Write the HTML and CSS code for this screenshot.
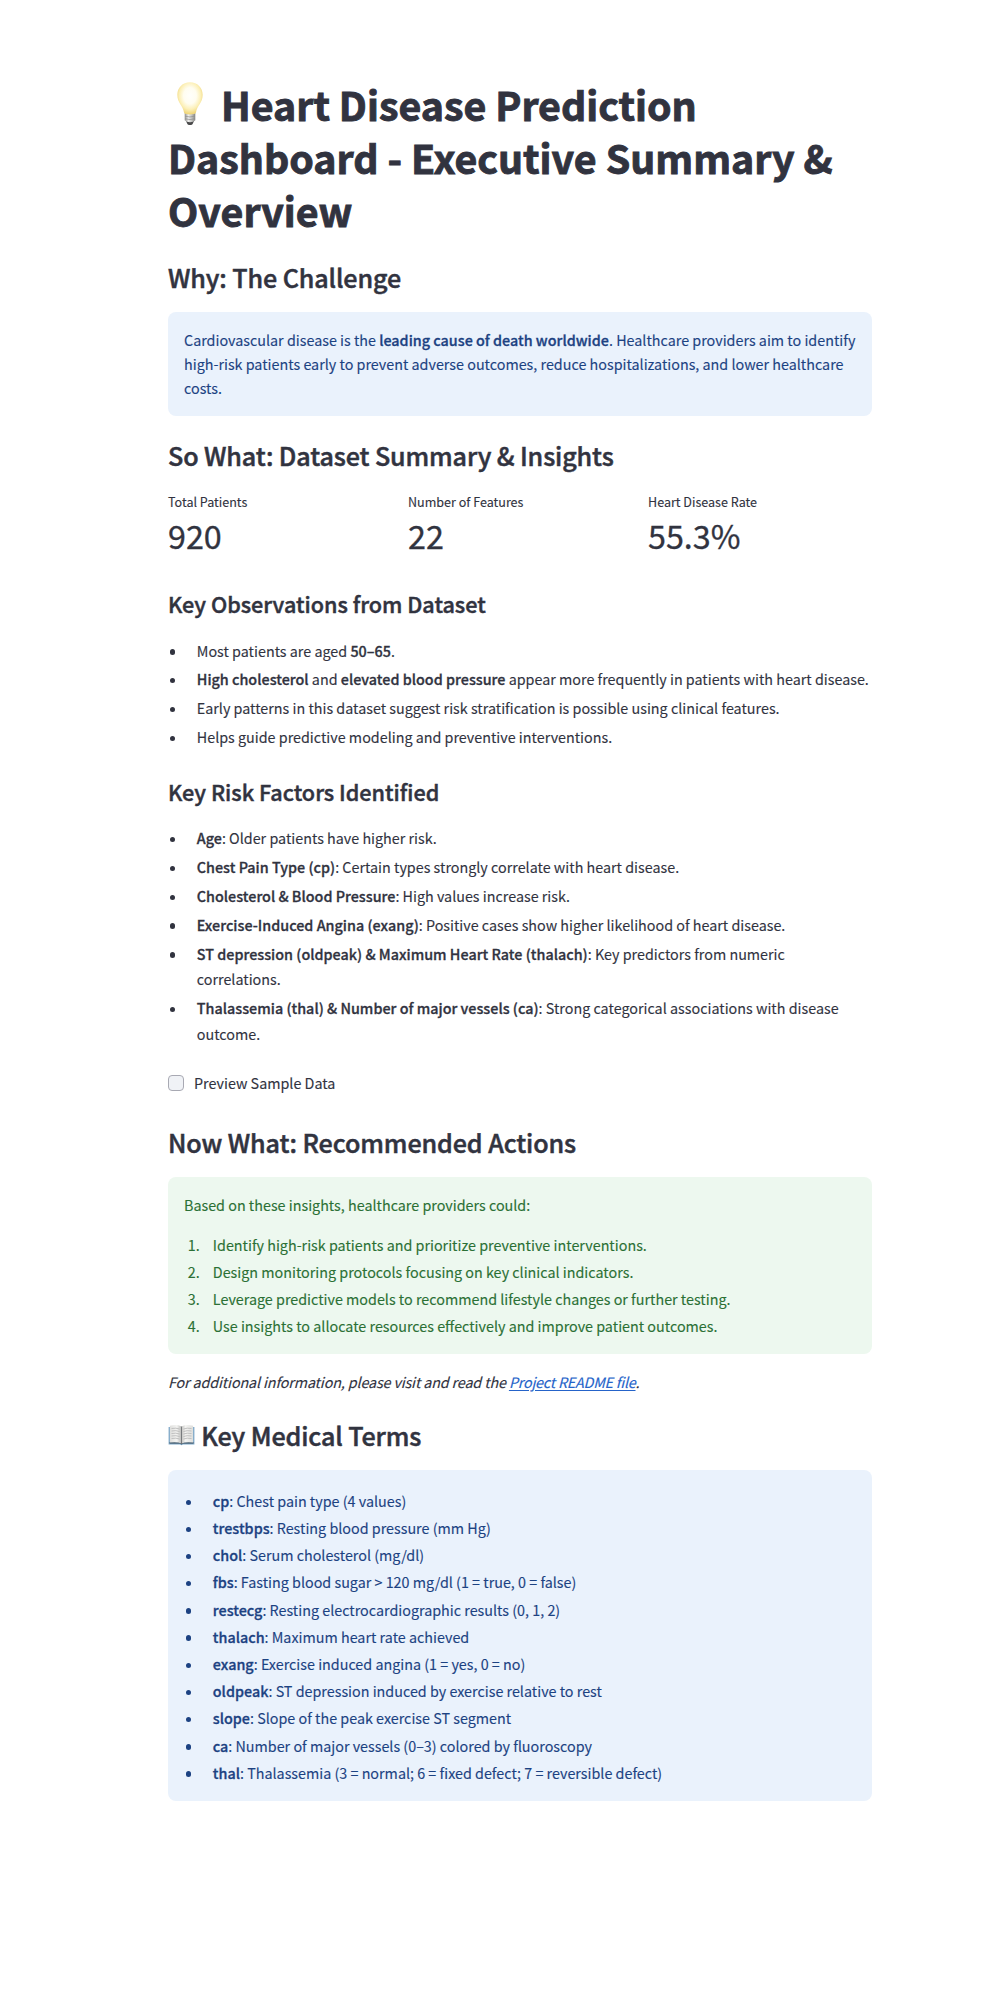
FILE: index.html
```
<!DOCTYPE html>
<html lang="en">
<head>
<meta charset="utf-8">
<title>Heart Disease Prediction Dashboard</title>
<link rel="stylesheet" href="styles.css">
</head>
<body>
<main class="page">
  <h1 class="title"><svg class="bulb" viewBox="0 0 44 46" aria-hidden="true">
      <defs>
        <radialGradient id="glass" cx="50%" cy="42%" r="56%">
          <stop offset="0" stop-color="#fffffb"/>
          <stop offset=".45" stop-color="#fffdf0"/>
          <stop offset=".75" stop-color="#fcf0b8"/>
          <stop offset="1" stop-color="#efd67c"/>
        </radialGradient>
        <linearGradient id="cap" x1="0" x2="1" y1="0" y2="0">
          <stop offset="0" stop-color="#8e8e8c"/>
          <stop offset=".35" stop-color="#eeeeec"/>
          <stop offset=".65" stop-color="#c4c4c2"/>
          <stop offset="1" stop-color="#858583"/>
        </linearGradient>
      </defs>
      <path d="M18 40h8l-1.500 3.200q-2.500 1.800-5 0z" fill="#4a4a4b"/>
      <path d="M16.700 32h10.600v7.300q-1.300 1.900-5.300 1.900t-5.300-1.900z" fill="url(#cap)"/>
      <path d="M17 35.200q5 1.500 10 0M17 37.800q5 1.500 10 0" fill="none" stroke="#8d8d8b" stroke-width=".7"/>
      <path d="M22 1.200c7.400 0 12.700 5.500 12.700 12.500 0 8.300-5.400 10.200-6.800 18-.3 1.300-2.700 1.700-5.900 1.700s-5.600-.4-5.900-1.700c-1.400-7.800-6.800-9.700-6.800-18C9.300 6.700 14.600 1.200 22 1.200z" fill="url(#glass)"/>
    </svg> Heart Disease Prediction<br>Dashboard - Executive Summary &amp;<br>Overview</h1>

  <h2 class="heading heading-why">Why: The Challenge</h2>
  <section class="alert info">
    <p>Cardiovascular disease is the <strong>leading cause of death worldwide</strong>. Healthcare providers aim to identify<br>high-risk patients early to prevent adverse outcomes, reduce hospitalizations, and lower healthcare<br>costs.</p>
  </section>

  <h2 class="heading heading-so">So What: Dataset Summary &amp; Insights</h2>
  <div class="metrics">
    <div class="metric"><div class="label">Total Patients</div><div class="value">920</div></div>
    <div class="metric"><div class="label">Number of Features</div><div class="value">22</div></div>
    <div class="metric"><div class="label">Heart Disease Rate</div><div class="value">55.3%</div></div>
  </div>

  <h3 class="subheading subheading-obs">Key Observations from Dataset</h3>
  <ul class="list">
    <li>Most patients are aged <strong>50–65</strong>.</li>
    <li><strong>High cholesterol</strong> and <strong>elevated blood pressure</strong> appear more frequently in patients with heart disease.</li>
    <li>Early patterns in this dataset suggest risk stratification is possible using clinical features.</li>
    <li>Helps guide predictive modeling and preventive interventions.</li>
  </ul>

  <h3 class="subheading subheading-risk">Key Risk Factors Identified</h3>
  <ul class="list">
    <li><strong>Age</strong>: Older patients have higher risk.</li>
    <li><strong>Chest Pain Type (cp)</strong>: Certain types strongly correlate with heart disease.</li>
    <li><strong>Cholesterol &amp; Blood Pressure</strong>: High values increase risk.</li>
    <li><strong>Exercise-Induced Angina (exang)</strong>: Positive cases show higher likelihood of heart disease.</li>
    <li><strong>ST depression (oldpeak) &amp; Maximum Heart Rate (thalach)</strong>: Key predictors from numeric<br>correlations.</li>
    <li><strong>Thalassemia (thal) &amp; Number of major vessels (ca)</strong>: Strong categorical associations with disease<br>outcome.</li>
  </ul>

  <label class="check"><input class="box" type="checkbox"><span>Preview Sample Data</span></label>

  <h2 class="heading heading-now">Now What: Recommended Actions</h2>
  <section class="alert success">
    <p>Based on these insights, healthcare providers could:</p>
    <ol class="list numbered">
      <li>Identify high-risk patients and prioritize preventive interventions.</li>
      <li>Design monitoring protocols focusing on key clinical indicators.</li>
      <li>Leverage predictive models to recommend lifestyle changes or further testing.</li>
      <li>Use insights to allocate resources effectively and improve patient outcomes.</li>
    </ol>
  </section>

  <p class="note">For additional information, please visit and read the <a href="#">Project README file</a>.</p>

  <h2 class="heading heading-terms"><svg class="book" viewBox="0 0 27 22" aria-hidden="true">
      <defs>
        <linearGradient id="leaf-left" x1="0" x2="1"><stop offset="0" stop-color="#dededc"/><stop offset=".6" stop-color="#f4f4f2"/><stop offset="1" stop-color="#b9b9b7"/></linearGradient>
        <linearGradient id="leaf-right" x1="0" x2="1"><stop offset="0" stop-color="#c2c2c0"/><stop offset=".35" stop-color="#f4f4f2"/><stop offset="1" stop-color="#dededc"/></linearGradient>
      </defs>
      <path d="M.6 3h25.800v17.400H15l-1.500.9-1.500-.9H.6z" fill="#7fa9c9"/>
      <path d="M1.500 18.300h24v1.300H14.700l-1.200.8-1.200-.8H1.500z" fill="#384956"/>
      <path d="M1.900 1.700Q9 .2 13.500 2.500v17Q9 17.600 1.900 18.600z" fill="url(#leaf-left)"/>
      <path d="M25.100 1.700Q18 .2 13.500 2.500v17q4.500-1.900 11.600-.9z" fill="url(#leaf-right)"/>
      <path d="M3.500 4.500q4.500-.9 8 .5M3.500 7q4.500-.9 8 .5M3.500 9.500q4.500-.9 8 .5M3.500 12q4.500-.9 8 .5M3.500 14.500q4.500-.9 8 .5M15.500 5q3.500-1.400 8-.5M15.500 7.500q3.500-1.400 8-.5M15.500 10q3.500-1.400 8-.5M15.500 12.500q3.500-1.400 8-.5M15.500 15q3.500-1.400 8-.5" fill="none" stroke="#b4b4b4" stroke-width=".8"/>
      <path d="M13.500 2.500v17.500" stroke="#686a6c" stroke-width=".8"/>
    </svg>Key Medical Terms</h2>
  <section class="alert info terms">
    <ul class="list">
      <li><strong>cp</strong>: Chest pain type (4 values)</li>
      <li><strong>trestbps</strong>: Resting blood pressure (mm Hg)</li>
      <li><strong>chol</strong>: Serum cholesterol (mg/dl)</li>
      <li><strong>fbs</strong>: Fasting blood sugar &gt; 120 mg/dl (1 = true, 0 = false)</li>
      <li><strong>restecg</strong>: Resting electrocardiographic results (0, 1, 2)</li>
      <li><strong>thalach</strong>: Maximum heart rate achieved</li>
      <li><strong>exang</strong>: Exercise induced angina (1 = yes, 0 = no)</li>
      <li><strong>oldpeak</strong>: ST depression induced by exercise relative to rest</li>
      <li><strong>slope</strong>: Slope of the peak exercise ST segment</li>
      <li><strong>ca</strong>: Number of major vessels (0–3) colored by fluoroscopy</li>
      <li><strong>thal</strong>: Thalassemia (3 = normal; 6 = fixed defect; 7 = reversible defect)</li>
    </ul>
  </section>
</main>
</body>
</html>
```
FILE: styles.css
```
* { box-sizing: border-box; }

body {
  margin: 0;
  background: #fff;
  color: #31333f;
  font-family: "Noto Sans CJK SC", "Noto Sans", sans-serif;
  font-size: 14.33px;
  line-height: 24px;
  -webkit-text-stroke: .12px currentColor;
}

h1, h2, h3, p, ul, ol { margin: 0; padding: 0; }

.page {
  width: 704px;
  min-height: 2002px;
  margin-left: 168px;
  padding-top: 78.3px;
  white-space: nowrap;
}

strong {
  font-weight: 500;
  letter-spacing: .02px;
  -webkit-text-stroke: .3px currentColor;
}

.title {
  font-size: 39.33px;
  line-height: 52.8px;
  font-weight: 700;
  -webkit-text-stroke: .9px currentColor;
}
.bulb {
  width: 44px;
  height: 46px;
  vertical-align: -6px;
}

.heading {
  font-size: 25.1px;
  line-height: 33.6px;
  font-weight: 500;
  letter-spacing: -.1px;
  -webkit-text-stroke: .5px currentColor;
}
.heading-why { margin: 24.2px 0 17.5px; }
.heading-so { margin: 22.9px 0 19.3px; }
.heading-now { margin: 30.8px 0 17.2px; }
.heading-terms { margin: 24.500px 0 17.500px; }
.book {
  width: 27px;
  height: 22px;
  margin-right: 6.200px;
  vertical-align: 0;
}

.subheading {
  font-size: 21.6px;
  line-height: 28.8px;
  font-weight: 500;
  -webkit-text-stroke: .45px currentColor;
}
.subheading-obs { margin: 32.2px 0 18.7px; }
.subheading-risk { margin: 28.200px 0 18.900px; }

.alert {
  padding: 16px;
  border-radius: 8px;
}
.info { background: #eaf2fc; color: #1c4282; }
.success { background: #edf8ef; color: #2b7035; height: 177px; }
.success p { margin-bottom: 16px; }
.terms { padding-top: 19px; height: 331px; }

.metrics {
  display: grid;
  grid-template-columns: repeat(3, 224px);
  gap: 16px;
}
.label { font-size: 12.560px; line-height: 20px; }
.value { font-size: 32.300px; line-height: 46.2px; -webkit-text-stroke: .3px currentColor; }

.list {
  list-style: none;
  display: flex;
  flex-direction: column;
  gap: 3.2px;
  line-height: 25.6px;
}
.list li { padding-left: 28.800px; }
.list li::before {
  content: "";
  display: inline-block;
  width: 5.400px;
  height: 5.400px;
  margin-left: -27px;
  margin-right: 21.600px;
  border-radius: 50%;
  background: currentColor;
  vertical-align: 2px;
}
.alert .list { line-height: 24px; }
.numbered { counter-reset: step; }
.list.numbered li::before {
  counter-increment: step;
  content: counter(step) ".";
  width: 25px;
  height: auto;
  margin-left: -25px;
  margin-right: 0;
  border-radius: 0;
  background: none;
  vertical-align: baseline;
}

.check {
  display: flex;
  gap: 10px;
  margin-top: 25px;
}
.box {
  appearance: none;
  width: 16px;
  height: 16px;
  margin: 3.600px 0 0;
  border: 1px solid #a8a9b3;
  border-radius: 4px;
  background: #f0f2f6;
}

.note {
  margin-top: 15px;
  line-height: 25.6px;
  font-style: italic;
  letter-spacing: -.135px;
}
.note a { color: #2563c9; text-underline-offset: 2px; letter-spacing: -.22px; }
```
